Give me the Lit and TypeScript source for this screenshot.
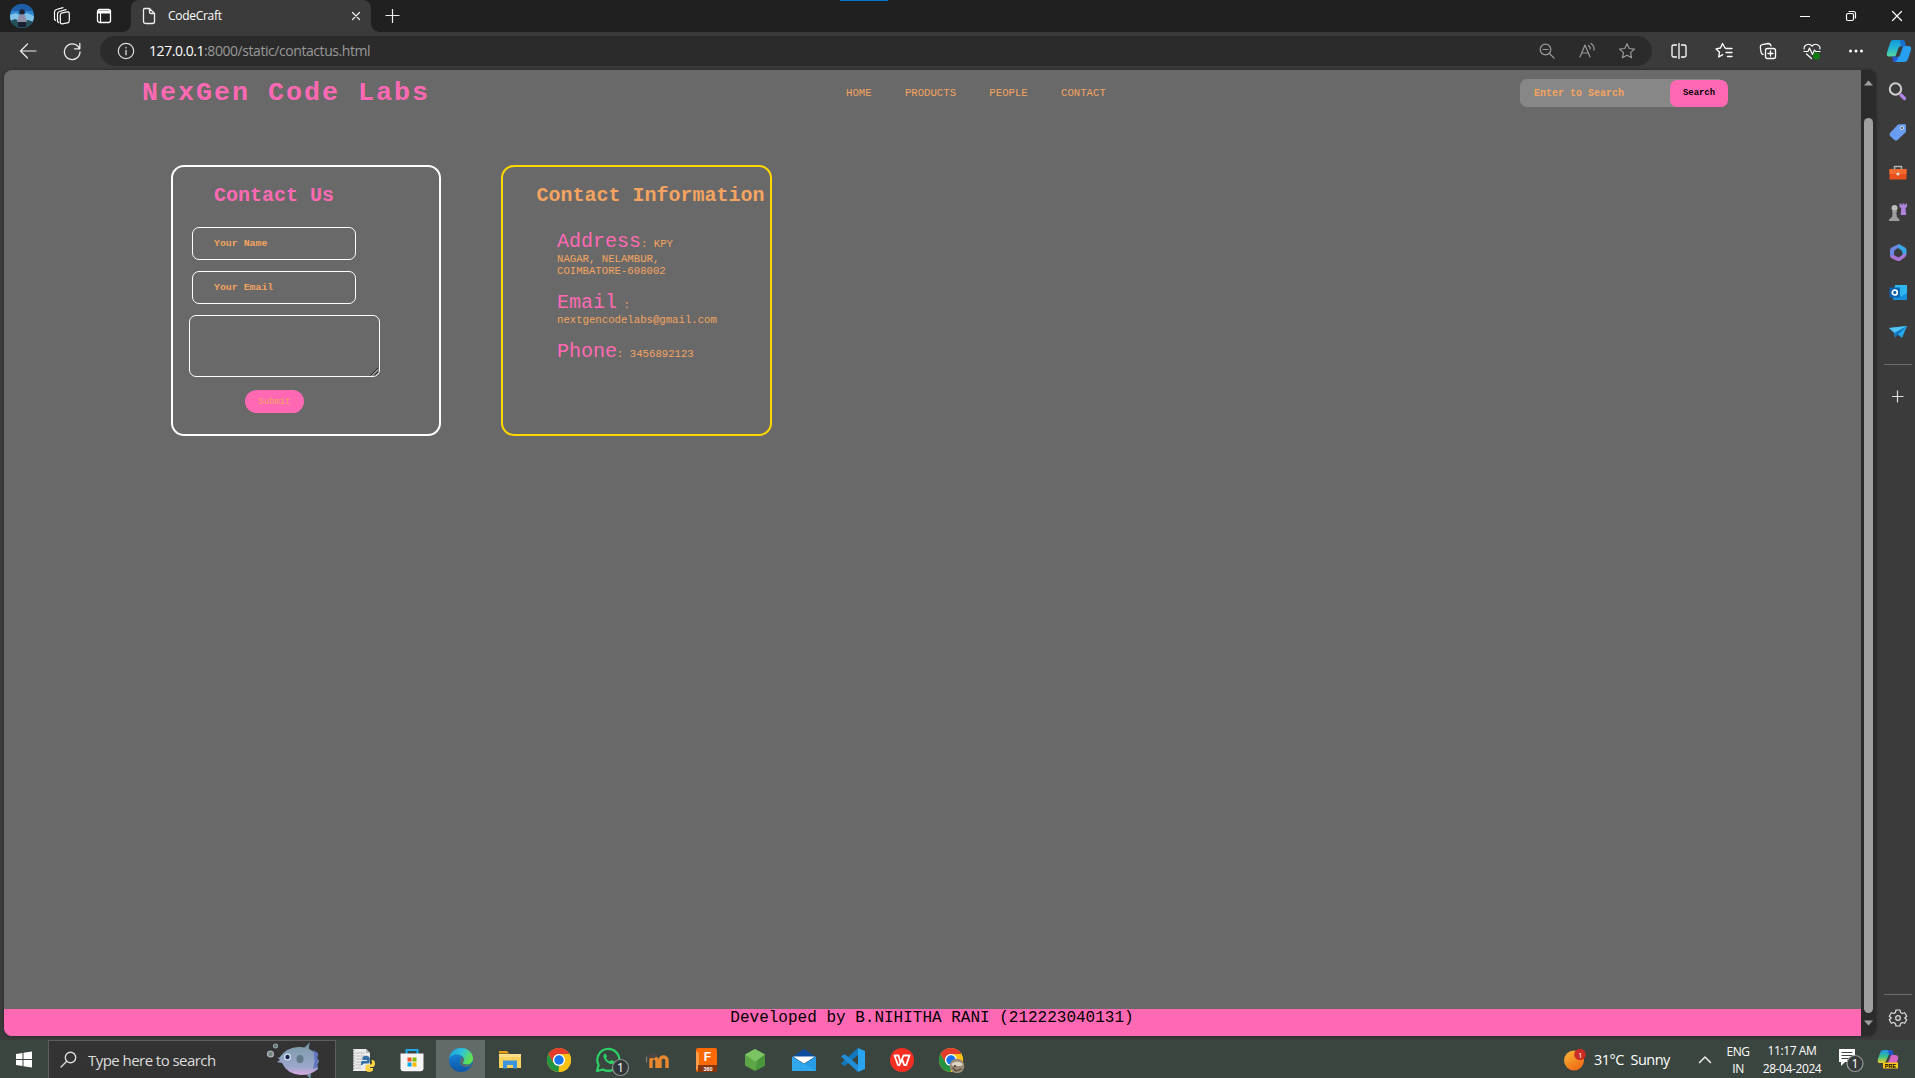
import { LitElement, html, css, svg } from "lit";
import { customElement } from "lit/decorators.js";
import { styleMap } from "lit/directives/style-map.js";

const icon = (w: number, h: number, body: unknown, cls = "") =>
  html`<svg class=${"ic " + cls} width=${w} height=${h} viewBox=${`0 0 ${w} ${h}`} fill="none" stroke-linecap="round" stroke-linejoin="round">${body}</svg>`;

const chromeRing = svg`
  <circle cx="12" cy="12" r="12" fill="#fbc116"/>
  <path d="M1.6 6L6.8 15L12 17.4L11.6 24A12 12 0 0 1 1.6 6z" fill="#229342"/>
  <path d="M22.4 6H12A6 6 0 0 1 17.2 15L12 24A12 12 0 0 0 22.4 6z" fill="#fbc116"/>
  <path d="M1.6 6A12 12 0 0 1 22.4 6H12A6 6 0 0 0 6.8 15z" fill="#e33b2e"/>
  <circle cx="12" cy="12" r="6" fill="#fff"/><circle cx="12" cy="12" r="4.7" fill="#1a73e8"/>`;

const taskIcons = [
  icon(24, 24, svg`<path d="M2 1h13l4 4v18H2z" fill="#ececec"/><path d="M15 1v4h4z" fill="#b5b5b5"/><path d="M5 5h8M5 8h11M5 11h11M5 14h6M5 17h5M5 20h5" stroke="#b0b0b0" stroke-width=".8"/><path d="M2.7 2v20" stroke="#888" stroke-dasharray="1 1.6"/>
    <path d="M10 17v-2c0-1.500 1-2 2-2h4v-1h-4.500V9.500C11.500 8.500 13 8 15 8s3.700.6 3.700 2v3.500c0 1.500-1 2-2 2H13.500c-1.500 0-2 .8-2 1.800z" fill="#3470a3"/><path d="M20.500 12h1c1.500 0 2.500 1.200 2.500 3.400S23 19 21.500 19H18v1h4v1.800c0 1.400-1.500 2.100-3.800 2.100s-3.700-.8-3.700-2.100V18.500c0-1.300.8-2 2-2h2.600c1.200 0 1.900-.7 1.900-2z" fill="#ffd343"/>`),
  icon(24, 24, svg`<path d="M6.500 7V2h11v5" stroke="#1fa9e8" stroke-width="2" stroke-linejoin="miter"/><path d="M.5 5.500h23v14.700q0 3-3 3h-17q-3 0-3-3z" fill="#f4f4f4"/><path d="M7.500 9.500h4v4h-4z" fill="#f25022"/><path d="M12.500 9.500h4v4h-4z" fill="#7fba00"/><path d="M7.500 14.500h4v4h-4z" fill="#00a4ef"/><path d="M12.500 14.500h4v4h-4z" fill="#ffb900"/>`),
  icon(24, 24, svg`<defs><linearGradient id="eg" x1="0" y1="0" x2="1" y2="0.4"><stop offset="0" stop-color="#1d9be0"/><stop offset=".55" stop-color="#2fc3d8"/><stop offset="1" stop-color="#62e04f"/></linearGradient><linearGradient id="eb" x1="0" y1="0" x2="0" y2="1"><stop offset="0" stop-color="#1b8fe0"/><stop offset="1" stop-color="#0c55a8"/></linearGradient></defs>
    <circle cx="12" cy="12" r="12" fill="url(#eb)"/><path d="M.1 11C.7 4.500 5.800 0 12 0c7 0 12 5 12 10.500 0 4-3 6-6 6-2.700 0-4.500-1-4.300-2 .2-.6 1.300-1.300 1.300-3 0-2.500-3-5-7-5C4 6.500 1 8.500.1 11z" fill="url(#eg)"/><path d="M12 9c2 .3 3 1.500 3 2.700 0 1.500-1.300 2-1.300 3 0 1.300 2 2.200 4.300 2.200 1.500 0 3.300-.3 4.700-1.200l-.5 1.500C20 19.500 12 20 11 15z" fill="#5a6b6b"/>`),
  icon(24, 24, svg`<path d="M1 3h8l2 2.500H1z" fill="#e8a317"/><path d="M1 6h22v14H1z" fill="#fbd35c"/><path d="M1 6h22v3H1z" fill="#ffe08a"/><path d="M5 20.500v-8h14v8h-4V17H9v3.500z" fill="#3b94dd"/>`),
  icon(24, 24, chromeRing),
  icon(24, 24, svg`<path d="M1 23l1.600-6A11 11 0 1 1 7 21.500z" fill="#3b4540" stroke="#2bd366" stroke-width="2.200"/><path d="M8.500 6c-1.500 1-1.500 3 .2 5.600 2 3 4.700 4.600 7 4.500 1.500-.1 2.500-1.500 2.500-2.800l-3-1.400-1.500 1.500c-2-.8-3-2.200-3.700-3.500l1-1.400-1.200-2.700z" fill="#2bd366"/><circle cx="24.500" cy="19.500" r="8" fill="#30353a" stroke="#8f9492"/><text x="24.500" y="24" class="badge" fill="#fff">1</text>`, "wa"),
  icon(24, 24, svg`<path d="M6 20v-9M6 13c0-4 6-4 6 0v7M15 20v-8c0-4 7-4 7 0v8" stroke="#e8872f" stroke-width="3.400" stroke-linecap="butt"/><path d="M0 9l8-4.500 6 2-5 4z" fill="#4b4643"/><path d="M1.500 9v5" stroke="#837a6c"/>`),
  icon(24, 24, svg`<path d="M2 2q0-2 2-2h17q2 0 2 2v22H4q-2 0-2-2z" fill="#f96a07"/><path d="M2 3l3 2v15l-3 2z" fill="#ff9d49"/><path d="M4 17h19v7H4z" fill="#87350a"/><text x="13.500" y="13" class="f" fill="#fff">F</text><text x="14" y="22.500" class="f3" fill="#fff">360</text>`),
  icon(24, 24, svg`<path d="M12 1l10 5.500v11L12 23 2 17.500v-11z" fill="#5da647"/><path d="M12 1l10 5.500-10 7L2 6.500z" fill="#7bc462"/><path d="M22 6.500v11L12 23l3-11z" fill="#4a963c"/>`),
  icon(26, 24, svg`<path d="M1 9L13 1l12 8v3H1z" fill="#0a4d9c"/><path d="M1 8.500l12 7.500 12-7.500V23H1z" fill="#31a8ee"/><path d="M25 8.500V23L1 9z" fill="#1b85d6" opacity=".35"/><path d="M2 8.500h22L13 15.500z" fill="#fff"/>`),
  icon(24, 24, svg`<path d="M17 0l7 3v18l-7 3z" fill="#29a5f0"/><path d="M17 0v7L3.500 18 0 15.500z" fill="#1279c0"/><path d="M17 24v-7L3.500 6 0 8.500z" fill="#1f8ed8"/>`),
  icon(24, 24, svg`<circle cx="12" cy="12" r="12" fill="#f52f22"/><path d="M4.500 7.500h4l2 7.500 3-7.500h6l-3.300 9.500h-2L12 11l-2.500 6H8z" stroke="#fff" stroke-width="1.800"/>`),
  icon(24, 24, svg`${chromeRing}<circle cx="18" cy="18" r="7.300" fill="#9c8b75"/><path d="M12 16q6-5 12 0l-2 2H14z" fill="#ddd5c4"/><path d="M14 20l3 3 5-2" stroke="#51463a"/><circle cx="16" cy="18" r="1" fill="#332b24"/>`, "wa"),
];

const sideIcons = [
  icon(20, 20, svg`<circle cx="7.500" cy="7" r="5.700" stroke="#cfcfcf" stroke-width="2"/><path d="M13 13l3.500 3.500" stroke="#b184e8" stroke-width="3.200"/>`),
  icon(20, 20, svg`<path d="M2 11L10 2.500l7-.5 1 1.500v6.500L9.500 18q-1.500 1-3 0L2 14q-1-1.500 0-3z" fill="#6a9df0"/><circle cx="14" cy="6" r="1.800" fill="#fff"/><circle cx="14" cy="6" r="1" fill="#333"/>`),
  icon(20, 20, svg`<path d="M6.500 7V4.500h7V7" stroke="#b5b5b5" stroke-width="1.500"/><path d="M1.500 7h17v10.500h-17z" fill="#e8501c"/><path d="M1.500 7h17v5h-17z" fill="#f26a30"/><circle cx="10" cy="12" r="1.600" fill="#ddd"/>`),
  icon(20, 20, svg`<path d="M11.500 1.500h2v1.500h1V1.500h2V3h1V1.500H19V5l-1.500 1 .7 7h-5.500l.5-7-1.700-1z" fill="#ae83dc"/><circle cx="6.500" cy="6" r="3" fill="#bdbdbd"/><path d="M4 9h5v1.500H8.200L9 15l2.500 2.500V19H1v-1.500L4 15l.8-4.500H4z" fill="#9c9c9c"/>`),
  icon(20, 20, svg`<path d="M11 2L3.500 5.500Q2 6.500 2 8v6l4 2V10q0-1.500 1.500-2.500L11 5.500z" fill="#6c86e6"/><path d="M11 2l6 3.500q1.500 1 1.500 3v4l-4 2.500V10.500q0-1.500-1.500-2.500l-3-2z" fill="#38a8e8"/><path d="M2 14l4-1 4.500 2.500 6-4 2 1q-.5 2-2 3l-4 3q-2 1-4 0L4 16.500Q2.500 15.500 2 14z" fill="#a875d6"/>`),
  icon(20, 20, svg`<path d="M7 3h12v15H5z" fill="#2eb7ee"/><path d="M5 13l7 2 7-4v7H5z" fill="#1690dc"/><path d="M1.500 5.500h10.500v10H1.500z" fill="#0a62b0"/><circle cx="6.800" cy="10.500" r="2.500" stroke="#fff" stroke-width="1.700"/>`),
  icon(20, 20, svg`<path d="M1 6l18-2-5 12-4-3.500-3 3-1-5z" fill="#25a7ea"/><path d="M1 6l18-2L6 10.500z" fill="#52c5f7"/><path d="M19 4L7 11l0 4.500 3-3z" fill="#1473b8"/>`),
];

@customElement("app-root")
export class AppRoot extends LitElement {
  static styles = css`
    :host { display: block; width: 1915px; height: 1078px; overflow: hidden; background: #3b3b3b; }
    * { box-sizing: border-box; }
    .win { display: flex; flex-direction: column; height: 1078px; font-family: "Open Sans", "Noto Sans", sans-serif; color: #fff; position: relative; }
    .ic { display: block; flex: none; stroke-width: 1.2; }
    .wa { overflow: visible; }
    .cell { display: flex; align-items: center; justify-content: center; flex: none; }
    .grow { flex: 1; }
    .topmark { position: absolute; left: 840px; top: 0; width: 48px; height: 1px; background: #0078d4; }

    .titlebar { height: 32px; background: #202020; display: flex; flex: none; align-items: stretch; }
    .tab { width: 240px; background: #3b3b3b; border-radius: 8px 8px 0 0; display: flex; align-items: center; padding: 0 6px 0 9px; position: relative; }
    .tab::before, .tab::after { content: ""; position: absolute; bottom: 0; width: 8px; height: 8px; }
    .tab::before { left: -8px; background: radial-gradient(circle at 0 0, transparent 7.5px, #3b3b3b 8px); }
    .tab::after { right: -8px; background: radial-gradient(circle at 100% 0, transparent 7.5px, #3b3b3b 8px); }
    .tabtitle { font-size: 12px; letter-spacing: -0.3px; margin-left: 9px; flex: 1; line-height: 16px; }

    .toolbar { height: 38px; display: flex; flex: none; padding: 4px 0; background: #3b3b3b; }
    .pill { width: 1552px; height: 30px; border-radius: 15px; background: #2b2b2b; display: flex; align-items: center; padding: 0 5px 0 11px; color: #999; }
    .url { font-size: 14px; letter-spacing: -0.44px; margin-left: 8px; flex: 1; line-height: 20px; white-space: nowrap; }
    .host { color: #fff; }

    .mid { display: flex; height: 970px; flex: none; padding: 0 0 4px 4px; }
    .view { width: 1872px; height: 966px; border-radius: 8px; overflow: hidden; display: flex; box-shadow: 0 0 3px #222; }
    .page { width: 1857px; background: #696969; display: flex; flex-direction: column; font-family: "Courier New", "Liberation Mono", monospace; color: #f4a460; }
    .scroll { width: 15px; background: #2b2b2b; display: flex; flex-direction: column; align-items: center; padding: 9px 0 8px; }
    .thumb { width: 9px; height: 895px; border-radius: 5px; background: #9f9f9f; margin: 32px 0 7px; }

    .header { height: 46px; display: flex; align-items: center; padding-left: 138px; }
    .logo { width: 704px; font-size: 26.67px; letter-spacing: 2px; font-weight: bold; color: #ff69b4; line-height: 30px; white-space: nowrap; }
    .nav { display: flex; gap: 33.3px; width: 674px; font-size: 10.67px; line-height: 12px; }
    .search { width: 208px; height: 28px; display: flex; align-items: flex-end; background: linear-gradient(90deg, #878787 200px, transparent 200px); border-radius: 7px; }
    .field { flex: 1; font-size: 10px; font-weight: bold; padding: 1px 0 0 14px; line-height: 27px; }
    .go { width: 58px; height: 27px; border-radius: 7px; background: #ff69b4; color: #000; font-size: 8.89px; font-weight: bold; line-height: 26px; text-align: center; }

    .cards { display: flex; gap: 60px; padding: 49px 0 0 167px; flex: 1; align-items: flex-start; }
    .card { width: 270px; height: 271px; border: 2px solid #fff; border-radius: 13px; display: flex; flex-direction: column; align-items: flex-start; }
    .card.info { border-color: gold; width: 271px; }
    .h { font-size: 20px; font-weight: bold; line-height: 24px; white-space: nowrap; }
    .form .h { color: #ff69b4; margin: 17px 0 19px 41px; }
    .info .h { margin: 17px 0 22px 33.5px; }
    .inp { width: 164px; height: 33px; border: 1px solid #fff; border-radius: 7px; margin: 0 0 11px 19px; padding-left: 21px; font-size: 9.9px; font-weight: bold; line-height: 32px; }
    .area { width: 191px; height: 62px; border: 1px solid #fff; border-radius: 7px; margin-left: 16px; display: flex; justify-content: flex-end; align-items: flex-end; }
    .submit { width: 59px; height: 23px; border-radius: 12px; background: #ff69b4; margin: 13px 0 0 72px; font-size: 8.89px; line-height: 24px; text-align: center; }
    .p { margin: 0 0 14px 54px; font-size: 10.67px; line-height: 12px; }
    .line { display: flex; align-items: baseline; white-space: pre; height: 23px; padding-top: 1px; }
    .k { font-size: 20px; color: #ff69b4; line-height: 22px; }
    .footer { height: 27px; background: #ff69b4; color: #000; font-size: 16px; line-height: 19px; text-align: center; padding-right: 1px; }

    .side { flex: 1; display: flex; flex-direction: column; align-items: center; padding: 2px 0 0 5px; }
    .scell { height: 40px; width: 34px; display: flex; align-items: center; justify-content: center; flex: none; }
    .rule { width: 28px; height: 1px; background: #6c6c6c; flex: none; }
    .gear { height: 41px; padding-top: 4px; }

    .task { height: 38px; background: #3b4540; display: flex; flex: none; align-items: stretch; }
    .tsearch { width: 288px; background: #333; border: 1px solid #5c5f5d; border-bottom: 0; display: flex; align-items: center; padding-left: 11px; color: #ddd; }
    .ttext { font-size: 15px; letter-spacing: -0.55px; width: 190px; padding-left: 11px; white-space: nowrap; line-height: 20px; padding-top: 1px; }
    .app { width: 49px; display: flex; justify-content: center; align-items: center; padding-top: 2px; flex: none; }
    .app.on { background: #626b67; }
    .weather { width: 128px; display: flex; align-items: center; gap: 8px; font-size: 14.5px; letter-spacing: -0.5px; white-space: pre; padding-top: 1px; }
    .two { display: flex; flex-direction: column; align-items: center; justify-content: center; font-size: 12px; line-height: 17.500px; letter-spacing: -0.4px; white-space: nowrap; padding-top: 1px; flex: none; }
    .lang { width: 36px; padding-top: 2px; }
    .clock { width: 72px; }
    .badge { font: 13px "Open Sans", sans-serif; text-anchor: middle; stroke: none; }
    .small { font-size: 8px; }
    .f { font: bold 12px "Liberation Sans", sans-serif; text-anchor: middle; }
    .f3 { font: bold 5.500px "Liberation Sans", sans-serif; text-anchor: middle; }
  `;

  private cell(w: number, c: unknown) {
    return html`<div class="cell" style=${styleMap({ width: w + "px" })}>${c}</div>`;
  }

  private titlebar() {
    return html`<div class="titlebar">
      ${this.cell(44, icon(24, 24, svg`<defs><clipPath id="av"><circle cx="12" cy="12" r="12"/></clipPath></defs><g clip-path="url(#av)"><path d="M0 0h24v24H0z" fill="#2f86d0"/><path d="M0 0h24v7H0z" fill="#1c5fa8"/><path d="M0 11l6-2 5 3 6-3 7 3v7H0z" fill="#80c2e8"/><path d="M0 17l5-2 5 2 8-1 6 2v6H0z" fill="#24505c"/><circle cx="12" cy="8" r="2.800" fill="#20242e"/><path d="M9 11q3-1.500 6 0l2 7H7z" fill="#8f90a8"/><path d="M8 18h8v5H8z" fill="#1b2030"/></g>`))}
      ${this.cell(36, icon(20, 20, svg`<g stroke="#fff"><rect x="8.300" y="6" width="9" height="11" rx="2" transform="skewY(-10) translate(0 2.600)"/><path d="M5.500 15.500V8q0-2 2-2.500L14 3.600M2.500 13.500V6q0-2 2-2.500L11 1.700M2.500 13.500l1 .8M5.500 15.500l1 1"/></g>`))}
      ${this.cell(48, icon(16, 16, svg`<rect x="1.500" y="1.500" width="13" height="13" rx="2" stroke="#fff" stroke-width="1.300"/><path d="M1.500 2.500h13v3h-13z" fill="#fff"/><path d="M4.500 5v9.500" stroke="#fff"/>`))}
      ${this.cell(3, "")}
      <div class="tab">
        ${icon(19, 18, svg`<path d="M4.500 1.500h5l5 5v8q0 2-2 2h-6q-3 0-3-2V3q0-1.500 1-1.500zM9.500 1.500v3.500q0 1.500 1.500 1.500h3.500" stroke="#eee" stroke-width="1.300"/>`)}
        <div class="tabtitle">CodeCraft</div>
        ${icon(18, 18, svg`<path d="M5.500 5.500l7 7M12.500 5.500l-7 7" stroke="#eee"/>`)}
      </div>
      ${this.cell(42, icon(16, 16, svg`<path d="M8.500 1v14M1.500 7.500h14" stroke="#eee" stroke-linecap="butt"/>`))}
      <div class="grow"></div>
      ${this.cell(36, icon(12, 12, svg`<path d="M1 6.500h10" stroke="#fff" stroke-width="1" stroke-linecap="butt"/>`))}
      ${this.cell(56, icon(12, 12, svg`<rect x="1.500" y="3.500" width="7" height="7" rx="1.500" stroke="#fff"/><path d="M4 1.500h4.500q2 0 2 2V8" stroke="#fff"/>`))}
      ${this.cell(36, icon(14, 14, svg`<path d="M2.500 2.500l9 9M11.500 2.500l-9 9" stroke="#fff"/>`))}
    </div>`;
  }

  private toolbar() {
    return html`<div class="toolbar">
      ${this.cell(56, icon(18, 18, svg`<path d="M17 9H1.500M8.500 2L1.500 9l7 7" stroke="#eee"/>`))}
      ${this.cell(32, icon(20, 20, svg`<path d="M17.500 8A7.800 7.800 0 1 0 18 11M17.800 2.500V7.800H12.500" stroke="#eee" stroke-width="1.300"/>`))}
      ${this.cell(12, "")}
      <div class="pill">
        ${this.cell(30, icon(18, 18, svg`<circle cx="9" cy="9" r="7.700" stroke="#ddd"/><path d="M9 8.300v4.500M9 5.500v.4" stroke="#ddd" stroke-width="1.300"/>`))}
        <div class="url"><span class="host">127.0.0.1</span>:8000/static/contactus.html</div>
        ${this.cell(40, icon(16, 16, svg`<circle cx="6.500" cy="6.500" r="5.300" stroke="#999"/><path d="M4 6.500h5M10.500 10.500L15 15" stroke="#999"/>`))}
        ${this.cell(40, icon(18, 18, svg`<path d="M2 15L7 3l5 12M4 11h6M10.500 3.500q2 1.500 1.700 3.500M13 1.500q3.500 2.300 3 6.500" stroke="#999"/>`))}
        ${this.cell(40, icon(18, 18, svg`<path d="M9 1.700l2.200 4.800 5.300.6-4 3.500 1.100 5.200L9 13.200l-4.600 2.600 1.100-5.200-4-3.500 5.300-.6z" stroke="#999"/>`))}
      </div>
      ${this.cell(54, icon(18, 18, svg`<path d="M6.500 3H3.500Q2 3 2 4.500v9Q2 15 3.500 15h3M11.500 3h3Q16 3 16 4.500v9q0 1.500-1.500 1.500h-3M9 1.500v15" stroke="#fff" stroke-width="1.300"/>`))}
      ${this.cell(36, icon(18, 18, svg`<path d="M11.300 6.300L10 6 7.500 1.500 5.500 6l-4.500.8 3.500 3.500L3.700 15l4-2.400M11 6.500h6M11 10.500h6M12.500 14.500H17" stroke="#fff" stroke-width="1.300"/>`))}
      ${this.cell(52, icon(18, 18, svg`<rect x="6.500" y="6.500" width="10" height="10" rx="2" stroke="#fff" stroke-width="1.300"/><path d="M11.500 9v5M9 11.500h5M4 12.500q-1.800-.5-2-2.500L1.300 5q0-2 1.800-2.300l6-1.200q2.300 0 2.900 2.300" stroke="#fff" stroke-width="1.300"/>`))}
      ${this.cell(36, icon(18, 18, svg`<path d="M1.200 7C.3 3 6 .5 9 4c3-3.500 9-1 7.800 3M1 9.500h4L6.500 6l3 6.500L11.500 8l1.200 1.500H17M3.500 12l5 4.500" stroke="#fff"/><circle cx="13.500" cy="14" r="3.500" fill="#107c10"/>`))}
      ${this.cell(52, icon(16, 6, svg`<circle cx="2.500" cy="3" r="1.500" fill="#fff"/><circle cx="8" cy="3" r="1.500" fill="#fff"/><circle cx="13.500" cy="3" r="1.500" fill="#fff"/>`))}
      ${this.cell(33, icon(26, 24, svg`<defs><linearGradient id="cp" x1="0" y1="0" x2="0" y2="1"><stop offset="0" stop-color="#1599dc"/><stop offset=".5" stop-color="#24b5d4"/><stop offset="1" stop-color="#58d69b"/></linearGradient></defs><path d="M7 1h10q1.500 0 1 2l-3 4q-2 0-3 3l-2 6q-.7 1.500-2 1.500H3q-3 0-2-4L4 4q1-3 3-3z" fill="url(#cp)"/><path d="M14 1h3q2 0 3 6l-5 1z" fill="#1870cf"/><path d="M18 7h4q4 0 3 4l-3 9q-1 3-4 3H9q-2 0-1-2l4-3q1.500 0 2-2l2.500-7q.5-2 1.500-2z" fill="#279ef0"/><path d="M6 17.500h4.500l1.500 2L9.500 23Q7 23 6 17.500z" fill="#2159d4"/>`))}
    </div>`;
  }

  private page() {
    return html`<div class="page">
      <div class="header">
        <div class="logo">NexGen Code Labs</div>
        <div class="nav">${["HOME", "PRODUCTS", "PEOPLE", "CONTACT"].map((t) => html`<span>${t}</span>`)}</div>
        <div class="search"><div class="field">Enter to Search</div><div class="go">Search</div></div>
      </div>
      <div class="cards">
        <div class="card form">
          <div class="h">Contact Us</div>
          <div class="inp">Your Name</div>
          <div class="inp">Your Email</div>
          <div class="area">${icon(9, 9, svg`<path d="M1 8L8 1M5 8l3-3" stroke="#222" stroke-width="1"/><path d="M2 8.500l6-6M6 8.500l2-2" stroke="#ddd" stroke-width=".7"/>`)}</div>
          <div class="submit">Submit</div>
        </div>
        <div class="card info">
          <div class="h">Contact Information</div>
          <div class="p"><div class="line"><span class="k">Address</span><span>: KPY</span></div><div>NAGAR, NELAMBUR,</div><div>COIMBATORE-608002</div></div>
          <div class="p"><div class="line"><span class="k">Email</span><span> :</span></div><div>nextgencodelabs@gmail.com</div></div>
          <div class="p"><div class="line"><span class="k">Phone</span><span>: 3456892123</span></div></div>
        </div>
      </div>
      <div class="footer">Developed by B.NIHITHA RANI (212223040131)</div>
    </div>`;
  }

  private taskbar() {
    return html`<div class="task">
      ${this.cell(48, icon(18, 18, svg`<path d="M1 4l6.500-1v6H1zM8.500 2.800L17 1.500V9H8.500zM1 10h6.500v6L1 15zM8.500 10H17v7.500l-8.500-1.300z" fill="#fff"/>`))}
      <div class="tsearch">
        ${icon(17, 18, svg`<circle cx="10.500" cy="6.500" r="5.200" stroke="#ddd" stroke-width="1.400"/><path d="M6.500 10.500L1 16" stroke="#ddd" stroke-width="1.400"/>`)}
        <div class="ttext">Type here to search</div>
        ${icon(54, 37, svg`<defs><linearGradient id="fi" x1="0" y1="0" x2="0" y2="1"><stop offset="0" stop-color="#7f9cab"/><stop offset=".7" stop-color="#9aa7cc"/><stop offset="1" stop-color="#d8a9e0"/></linearGradient></defs>
          <path d="M36 8l7-7q-2 6 0 10zM37 30l6 8q2-5 0-10z" fill="#7594a8"/><path d="M12 17Q20 5 34 6q9 1 14 6l3 1-1 4 2 3-2 4 1 4q-7 6-17 6-14-1-19-12l-5-1 3-2-3-3z" fill="url(#fi)"/><path d="M46 9l5 3-1 5 2 3-2 3 1 3-5 2q3-9 0-19z" fill="#6277c0"/><circle cx="20.500" cy="16" r="3.500" fill="#d4e6f0"/><circle cx="20.500" cy="16" r="2.200" fill="#142050"/><ellipse cx="33" cy="18" rx="3.500" ry="4" fill="#607a88"/><circle cx="3.500" cy="13" r="3" fill="#72877c" stroke="#b9b4c5"/><circle cx="8.500" cy="5" r="2" fill="#55706c" stroke="#9ba9ad"/>`)}
      </div>
      ${this.cell(2, "")}
      ${taskIcons.map((t, i) => html`<div class=${i === 2 ? "app on" : "app"}>${t}</div>`)}
      <div class="grow"></div>
      <div class="weather">${icon(24, 24, svg`<defs><linearGradient id="su" x1="0" y1="0" x2=".6" y2="1"><stop offset="0" stop-color="#f5b838"/><stop offset="1" stop-color="#f26c16"/></linearGradient></defs><circle cx="12" cy="12.500" r="10" fill="url(#su)"/><circle cx="18" cy="6.500" r="5.800" fill="#c82c22"/><text x="18" y="9.500" class="badge small" fill="#fff">1</text>`)}<span>31°C  Sunny</span></div>
      ${this.cell(30, icon(14, 9, svg`<path d="M1.500 7.500L7 2l5.500 5.500" stroke="#eee" stroke-width="1.500"/>`))}
      <div class="two lang"><span>ENG</span><span>IN</span></div>
      <div class="two clock"><span>11:17 AM</span><span>28-04-2024</span></div>
      ${this.cell(46, icon(30, 30, svg`<path d="M3 5h16v13h-10l-4 4v-4H3z" fill="#fff"/><path d="M6 8.500h10M6 11.500h10M6 14.500h7" stroke="#3b4540"/><circle cx="19" cy="19.500" r="8" fill="#343b3a" stroke="#979c9a"/><text x="19" y="24" class="badge" fill="#fff">1</text>`))}
      ${this.cell(27, icon(22, 22, svg`<defs><linearGradient id="cq" x1="0" y1="0" x2="0" y2="1"><stop offset="0" stop-color="#218de9"/><stop offset=".5" stop-color="#35c18d"/><stop offset="1" stop-color="#f0cf25"/></linearGradient></defs><path d="M6 2h8L9 13q-1 2-3 2H2q-2-1-1-4l2-6q1-3 3-3z" fill="url(#cq)"/><path d="M11 2h4l2 5h-5z" fill="#2455c8"/><path d="M15 7h3q4 0 3 4l-2 6h-9l3-7q.5-3 2-3z" fill="#d465c5"/><path d="M6 14.500h15v6H6z" fill="#ffc91a"/><text x="13.500" y="20" class="f3" fill="#000">PRE</text>`))}
      ${this.cell(14, "")}
    </div>`;
  }

  render() {
    return html`<div class="win">
      ${this.titlebar()}${this.toolbar()}
      <div class="mid">
        <div class="view">
          ${this.page()}
          <div class="scroll">
            ${icon(11, 7, svg`<path d="M1 6.500L5.500 1.500 10 6.500z" fill="#9f9f9f"/>`)}
            <div class="thumb"></div>
            ${icon(11, 7, svg`<path d="M1 .5L5.500 5.500 10 .5z" fill="#9f9f9f"/>`)}
          </div>
        </div>
        <div class="side">
          ${sideIcons.map((s) => html`<div class="scell">${s}</div>`)}
          ${this.cell(34, icon(1, 12, ""))}
          <div class="rule"></div>
          ${this.cell(34, icon(12, 62, svg`<path d="M5.500 25.500v12M-.5 31.500h12" stroke="#ddd" stroke-linecap="butt"/>`))}
          <div class="grow"></div>
          <div class="rule"></div>
          <div class="scell gear">${icon(20, 20, svg`<path d="M8 2h4l.6 2.600 1.600.9 2.500-.8 2 3.500-1.900 1.800 1.900 1.800-2 3.500-2.500-.8-1.600.9L12 18H8l-.6-2.600-1.600-.9-2.500.8-2-3.500L3.200 10 1.300 8.200l2-3.500 2.500.8 1.600-.9z" stroke="#ddd"/><circle cx="10" cy="10" r="2.300" stroke="#ddd"/>`)}</div>
        </div>
      </div>
      ${this.taskbar()}
      <div class="topmark"></div>
    </div>`;
  }
}
